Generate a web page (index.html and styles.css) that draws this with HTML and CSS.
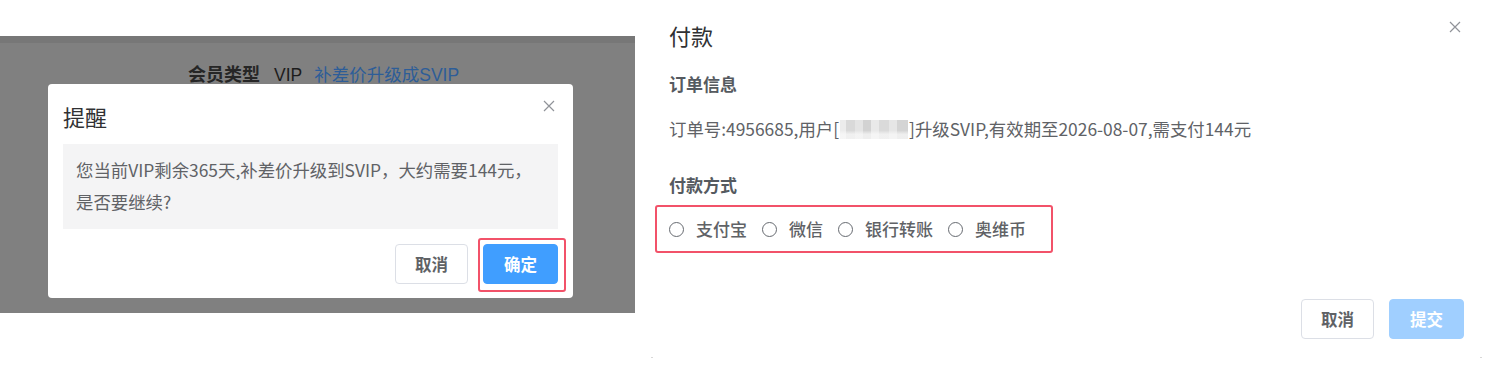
FILE: index.html
```html
<!DOCTYPE html>
<html lang="zh">
<head>
<meta charset="utf-8">
<title>付款</title>
<link rel="stylesheet" href="styles.css">
</head>
<body>
<div class="left-pane">
  <div class="stage">
    <div class="band"></div>
    <div class="bg-line">
      <span class="bg-label">会员类型</span>
      <span class="bg-value">VIP</span>
      <span class="bg-link">补差价升级成SVIP</span>
    </div>
    <div class="dialog">
      <div class="dlg-title">提醒</div>
      <svg class="close close-left" width="12" height="12" viewBox="0 0 12 12"><path d="M1 1 L11 11 M11 1 L1 11" stroke="#909399" stroke-width="1.2" fill="none"/></svg>
      <div class="dlg-body">您当前VIP剩余365天,补差价升级到SVIP，大约需要144元，<br>是否要继续?</div>
      <div class="dlg-footer">
        <button class="btn btn-default btn-left-cancel">取消</button>
        <span class="hl"><button class="btn btn-primary">确定</button></span>
      </div>
    </div>
  </div>
</div>
<div class="right-pane">
  <svg class="close close-right" width="12" height="12" viewBox="0 0 12 12"><path d="M1 1 L11 11 M11 1 L1 11" stroke="#909399" stroke-width="1.2" fill="none"/></svg>
  <div class="pay-title">付款</div>
  <div class="sec-title sec-order">订单信息</div>
  <div class="order-line">订单号:4956685,用户[<span class="blur"></span>]升级SVIP,有效期至2026-08-07,需支付144元</div>
  <div class="sec-title sec-method">付款方式</div>
  <div class="radio-wrap">
    <div class="radio-box">
      <label class="radio"><span class="circle"></span><span class="radio-label">支付宝</span></label>
      <label class="radio"><span class="circle"></span><span class="radio-label">微信</span></label>
      <label class="radio"><span class="circle"></span><span class="radio-label">银行转账</span></label>
      <label class="radio"><span class="circle"></span><span class="radio-label">奥维币</span></label>
    </div>
  </div>
  <div class="pay-footer">
    <button class="btn btn-default">取消</button>
    <button class="btn btn-disabled">提交</button>
  </div>
  <span class="dot dot-l"></span>
  <span class="dot dot-r"></span>
</div>
</body>
</html>
```
FILE: styles.css
```css
* { box-sizing: border-box; }
html, body { margin: 0; padding: 0; }
body {
  width: 1487px;
  height: 366px;
  overflow: hidden;
  background: #ffffff;
  display: flex;
  font-family: "Noto Sans CJK SC", "Noto Sans", sans-serif;
  color: #606266;
}
.left-pane {
  width: 635px;
  flex: none;
  padding-top: 36px;
}
.stage {
  position: relative;
  height: 277px;
  background: #808080;
}
.band {
  height: 7px;
  background: #777777;
}
.bg-line {
  display: flex;
  align-items: center;
  padding: 20px 0 0 188px;
  font-family: "Liberation Sans", "Noto Sans CJK SC", sans-serif;
  font-size: 18px;
  line-height: 24px;
}
.bg-label { font-weight: 700; color: #262626; }
.bg-value { margin-left: 14px; color: #1c1c1c; font-size: 17.5px; }
.bg-link { margin-left: 12px; color: #2d5d98; font-size: 17.5px; }

.dialog {
  position: absolute;
  left: 48px;
  top: 48px;
  width: 525px;
  height: 214px;
  background: #ffffff;
  border-radius: 4px;
  padding: 0 15px;
}
.dlg-title {
  padding-top: 19px;
  font-size: 22px;
  line-height: 26px;
  color: #303133;
}
.close { position: absolute; display: block; }
.close-left { right: 18px; top: 16px; }
.dlg-body {
  margin-top: 15px;
  background: #f4f4f5;
  padding: 10px 13px 11px;
  font-size: 17.4px;
  line-height: 32px;
  color: #606266;
  white-space: nowrap;
}
.dlg-footer {
  display: flex;
  justify-content: flex-end;
  align-items: flex-start;
  margin-top: 9px;
  margin-right: -8px;
}
.btn {
  height: 40px;
  padding: 0;
  border-radius: 4px;
  font-family: "Noto Sans CJK SC", sans-serif;
  font-size: 16.5px;
  font-weight: 700;
  line-height: 38px;
  text-align: center;
  cursor: pointer;
}
.btn-default {
  background: #ffffff;
  border: 1px solid #dcdfe6;
  color: #606266;
}
.btn-left-cancel { margin-top: 6px; width: 73px; }
.hl {
  display: inline-block;
  margin-left: 10px;
  border: 2px solid #f25269;
  border-radius: 3px;
  padding: 4px 6px 6px 3px;
}
.btn-primary {
  display: block;
  width: 75px;
  background: #409eff;
  border: 1px solid #409eff;
  color: #ffffff;
}

.right-pane {
  position: relative;
  flex: 1;
  padding: 0 23px 0 34px;
}
.close-right { right: 26px; top: 21px; }
.pay-title {
  padding-top: 22px;
  font-size: 22px;
  line-height: 26px;
  color: #303133;
}
.sec-title {
  font-size: 17px;
  line-height: 24px;
  font-weight: 700;
  color: #555a60;
}
.sec-order { margin-top: 24px; }
.order-line {
  margin-top: 21px;
  font-size: 17.4px;
  line-height: 24px;
  color: #606266;
  white-space: nowrap;
}
.blur {
  display: inline-block;
  width: 68px;
  height: 19px;
  vertical-align: -3px;
  margin: 0 1px;
  background:
    linear-gradient(180deg, rgba(255,255,255,0) 0 55%, rgba(250,250,250,0.7) 75% 100%),
    linear-gradient(90deg, #ececec 0 9%, #d9d9d9 9% 22%, #e4e4e4 22% 34%, #d2d2d2 34% 46%, #e9e9e9 46% 58%, #dadada 58% 72%, #e6e6e6 72% 84%, #d4d4d4 84% 100%);
}
.sec-method { margin-top: 32px; }
.radio-wrap { margin-top: 8px; }
.radio-box {
  display: inline-flex;
  align-items: center;
  height: 48px;
  margin-left: -14px;
  padding: 0 25px 0 12px;
  border: 2px solid #f25269;
  border-radius: 3px;
  gap: 15px;
}
.radio {
  display: flex;
  align-items: center;
  gap: 12px;
}
.circle {
  width: 15px;
  height: 15px;
  border: 1px solid #666a70;
  border-radius: 50%;
  background: #ffffff;
}
.radio-label {
  font-size: 17px;
  line-height: 24px;
  font-weight: 500;
  color: #606266;
}
.pay-footer {
  display: flex;
  justify-content: flex-end;
  gap: 15px;
  margin-top: 46px;
}
.pay-footer .btn-default { width: 73px; }
.btn-disabled {
  width: 75px;
  background: #a0cfff;
  border: 1px solid #a0cfff;
  color: #ffffff;
}
.dot {
  position: absolute;
  top: 357px;
  width: 2px;
  height: 1px;
  background: #d8d8d8;
}
.dot-l { left: 16px; }
.dot-r { left: 845px; }
```
